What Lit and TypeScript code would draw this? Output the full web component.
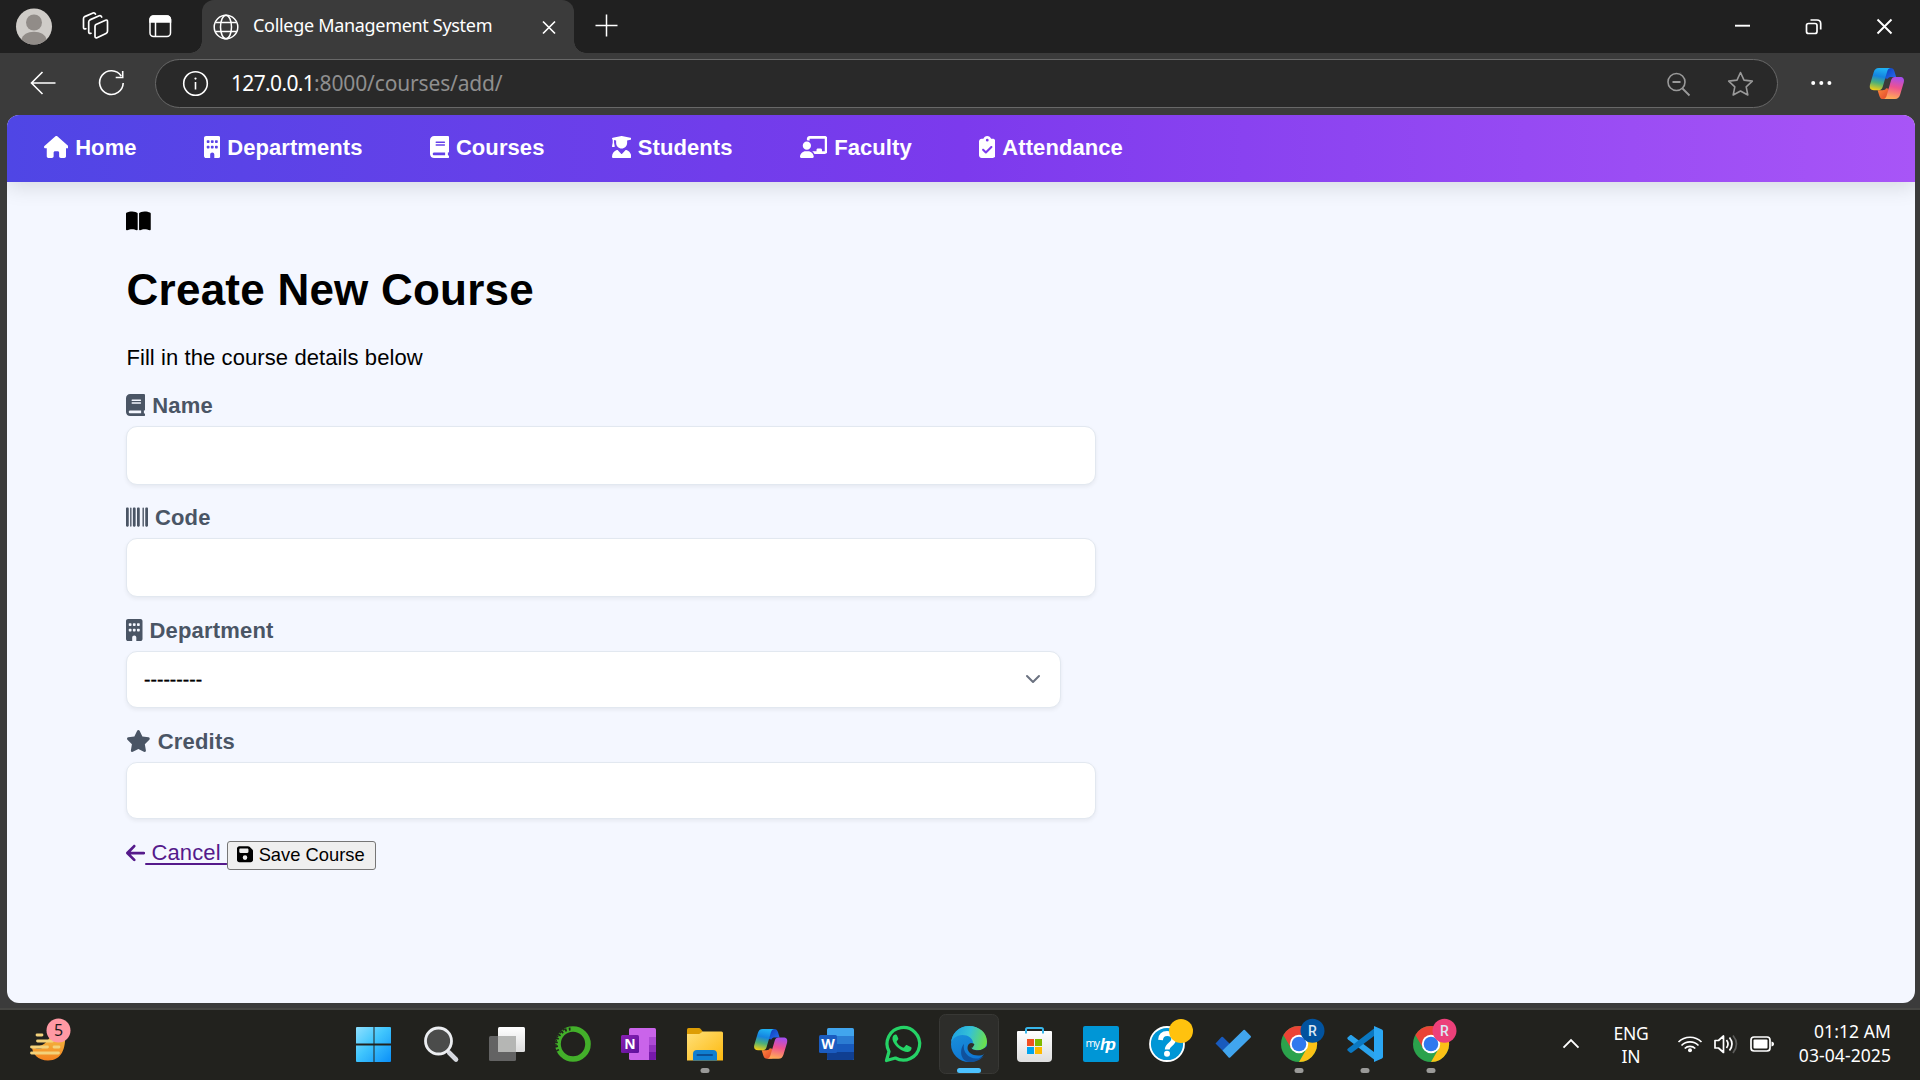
import { LitElement, html, css, svg } from "lit";
import { customElement, property } from "lit/decorators.js";

type Glyph = { w: number; d: string };

const glyphs: Record<string, Glyph> = {
  house: { w: 576, d: "M575.8 255.5c0 18-15 32.1-32 32.1h-32l.7 160.2c0 2.7-.2 5.4-.5 8.1V472c0 22.1-17.9 40-40 40H456c-1.1 0-2.2 0-3.3-.1c-1.4 .1-2.8 .1-4.2 .1H416 392c-22.1 0-40-17.9-40-40V448 384c0-17.7-14.3-32-32-32H256c-17.7 0-32 14.3-32 32v64 24c0 22.1-17.9 40-40 40H160 128.1c-1.5 0-3-.1-4.5-.2c-1.2 .1-2.4 .2-3.6 .2H104c-22.1 0-40-17.9-40-40V360c0-.9 0-1.9 .1-2.8V287.6H32c-18 0-32-14-32-32.1c0-9 3-17 10-24L266.4 8c7-7 15-8 22-8s15 2 21 7L564.8 231.5c8 7 12 15 11 24z" },
  building: { w: 384, d: "M48 0C21.5 0 0 21.5 0 48V464c0 26.5 21.5 48 48 48h96V432c0-26.5 21.5-48 48-48s48 21.5 48 48v80h96c26.5 0 48-21.5 48-48V48c0-26.5-21.5-48-48-48H48zM64 240c0-8.800 7.200-16 16-16h32c8.800 0 16 7.200 16 16v32c0 8.800-7.200 16-16 16H80c-8.800 0-16-7.200-16-16V240zm112-16h32c8.800 0 16 7.200 16 16v32c0 8.800-7.200 16-16 16H176c-8.800 0-16-7.200-16-16V240c0-8.800 7.200-16 16-16zm80 16c0-8.800 7.200-16 16-16h32c8.800 0 16 7.200 16 16v32c0 8.800-7.200 16-16 16H272c-8.800 0-16-7.200-16-16V240zM80 96h32c8.800 0 16 7.200 16 16v32c0 8.800-7.200 16-16 16H80c-8.800 0-16-7.200-16-16V112c0-8.800 7.200-16 16-16zm80 16c0-8.800 7.200-16 16-16h32c8.800 0 16 7.200 16 16v32c0 8.800-7.200 16-16 16H176c-8.800 0-16-7.200-16-16V112zM272 96h32c8.800 0 16 7.200 16 16v32c0 8.800-7.200 16-16 16H272c-8.800 0-16-7.200-16-16V112c0-8.800 7.200-16 16-16z" },
  book: { w: 448, d: "M96 0C43 0 0 43 0 96V416c0 53 43 96 96 96H384h32c17.700 0 32-14.300 32-32s-14.300-32-32-32V384c17.700 0 32-14.300 32-32V32c0-17.700-14.300-32-32-32H384 96zm0 384H352v64H96c-17.700 0-32-14.300-32-32s14.300-32 32-32zm32-240c0-8.800 7.200-16 16-16H336c8.800 0 16 7.200 16 16s-7.200 16-16 16H144c-8.800 0-16-7.200-16-16zm16 48H336c8.800 0 16 7.200 16 16s-7.200 16-16 16H144c-8.800 0-16-7.200-16-16s7.200-16 16-16z" },
  graduate: { w: 448, d: "M219.300 .5c3.100-.6 6.300-.6 9.400 0l200 40C439.900 42.700 448 52.600 448 64s-8.100 21.300-19.300 23.500L352 102.900V160c0 70.700-57.300 128-128 128s-128-57.300-128-128V102.900L48 93.300v65.100l15.700 78.400c.9 4.700-.3 9.600-3.300 13.300s-7.600 5.900-12.400 5.900H16c-4.800 0-9.300-2.100-12.400-5.900s-4.300-8.600-3.300-13.300L16 158.400V86.600C6.500 83.300 0 74.300 0 64C0 52.600 8.100 42.700 19.300 40.500l200-40zM111.900 327.700c10.500-3.400 21.800 .4 29.400 8.500l71 75.500c6.300 6.700 17 6.700 23.300 0l71-75.500c7.600-8.100 18.900-11.900 29.400-8.500C401 348.600 448 409.400 448 481.300c0 17-13.800 30.700-30.700 30.700H30.700C13.800 512 0 498.200 0 481.300c0-71.900 47-132.700 111.900-153.600z" },
  teacher: { w: 640, d: "M160 64c0-35.300 28.700-64 64-64H576c35.300 0 64 28.700 64 64V352c0 35.300-28.700 64-64 64H336.800c-11.800-25.500-29.900-47.500-52.400-64H384V320c0-17.700 14.300-32 32-32h64c17.700 0 32 14.300 32 32v32h64V64L224 64v49.100C205.200 102.200 183.300 96 160 96V64zm0 64a96 96 0 1 1 0 192 96 96 0 1 1 0-192zM133.300 352h53.300C260.300 352 320 411.700 320 485.300c0 14.700-11.900 26.700-26.700 26.700H26.700C11.900 512 0 500.100 0 485.300C0 411.700 59.700 352 133.300 352z" },
  clipboard: { w: 384, d: "M192 0c-41.800 0-77.400 26.700-90.500 64H64C28.700 64 0 92.700 0 128V448c0 35.300 28.700 64 64 64H320c35.300 0 64-28.700 64-64V128c0-35.300-28.700-64-64-64H282.500C269.400 26.700 233.800 0 192 0zm0 64a32 32 0 1 1 0 64 32 32 0 1 1 0-64zM305 273L177 401c-9.400 9.400-24.600 9.400-33.900 0L79 337c-9.400-9.400-9.400-24.600 0-33.900s24.600-9.400 33.900 0l47 47L271 239c9.400-9.400 24.600-9.400 33.900 0s9.400 24.600 0 33.900z" },
  open: { w: 576, d: "M249.600 471.500c10.800 3.800 22.400-4.100 22.400-15.500V78.600c0-4.200-1.600-8.400-5-11C247.400 52 202.400 32 144 32C93.500 32 46.300 45.300 18.100 56.100C6.800 60.500 0 71.700 0 83.800V454.100c0 11.900 12.800 20.200 24.100 16.500C55.600 460.100 105.500 448 144 448c33.900 0 79 14 105.600 23.500zm76.800 0C353 462 398.100 448 432 448c38.500 0 88.400 12.100 119.900 22.600c11.300 3.800 24.100-4.600 24.100-16.500V83.800c0-12.100-6.800-23.300-18.100-27.600C529.700 45.300 482.500 32 432 32c-58.400 0-103.400 20-123 35.600c-3.300 2.600-5 6.800-5 11V456c0 11.400 11.700 19.300 22.400 15.500z" },
  barcode: { w: 512, d: "M24 32C10.700 32 0 42.700 0 56V456c0 13.300 10.700 24 24 24H40c13.300 0 24-10.700 24-24V56c0-13.300-10.700-24-24-24H24zm88 0c-8.800 0-16 7.200-16 16V464c0 8.800 7.200 16 16 16s16-7.200 16-16V48c0-8.800-7.200-16-16-16zm72 0c-13.300 0-24 10.700-24 24V456c0 13.300 10.700 24 24 24h16c13.300 0 24-10.700 24-24V56c0-13.300-10.700-24-24-24H184zm96 0c-13.300 0-24 10.700-24 24V456c0 13.300 10.700 24 24 24h16c13.300 0 24-10.700 24-24V56c0-13.300-10.700-24-24-24H280zM448 56V456c0 13.300 10.700 24 24 24h16c13.300 0 24-10.700 24-24V56c0-13.300-10.700-24-24-24H472c-13.300 0-24 10.700-24 24zm-64-8V464c0 8.800 7.200 16 16 16s16-7.200 16-16V48c0-8.800-7.200-16-16-16s-16 7.200-16 16z" },
  star: { w: 576, d: "M316.900 18C311.600 7 300.400 0 288.100 0s-23.400 7-28.800 18L195 150.300 51.400 171.500c-12 1.800-22 10.200-25.700 21.700s-.7 24.200 7.900 32.700L137.800 329 113.200 474.700c-2 12 3 24.200 12.900 31.300s23 8 33.800 2.300l128.300-68.500 128.300 68.500c10.800 5.700 23.900 4.900 33.800-2.300s14.900-19.300 12.900-31.300L438.500 329 542.700 225.900c8.600-8.500 11.700-21.200 7.900-32.700s-13.700-19.900-25.700-21.700L381.200 150.300 316.900 18z" },
  arrow: { w: 448, d: "M9.400 233.400c-12.500 12.500-12.500 32.800 0 45.300l160 160c12.500 12.500 32.800 12.500 45.300 0s12.500-32.800 0-45.300L109.200 288 416 288c17.700 0 32-14.300 32-32s-14.300-32-32-32l-306.700 0L214.600 118.600c12.500-12.500 12.500-32.800 0-45.300s-32.800-12.500-45.300 0l-160 160z" },
  floppy: { w: 448, d: "M64 32C28.700 32 0 60.700 0 96V416c0 35.300 28.700 64 64 64H384c35.300 0 64-28.700 64-64V173.300c0-17-6.700-33.300-18.700-45.300L352 50.700C340 38.700 323.700 32 306.700 32H64zm0 96c0-17.700 14.300-32 32-32H288c17.700 0 32 14.300 32 32v64c0 17.700-14.300 32-32 32H96c-17.700 0-32-14.300-32-32V128zM224 288a64 64 0 1 1 0 128 64 64 0 1 1 0-128z" },
};

const glyph = (name: string, size = 22) => {
  const g = glyphs[name];
  return html`<svg class="glyph" width=${(g.w / 512) * size} height=${size} viewBox="0 0 ${g.w} 512"><path fill="currentColor" d=${g.d} /></svg>`;
};

/* Two interlocking ribbons, drawn in a 35.5 x 32.5 box. */
const copilotArt = svg`
  <defs>
    <linearGradient id="cpA" x1="0.4" y1="0" x2="0.2" y2="1"><stop offset="0" stop-color="#1fb0f2"/><stop offset=".35" stop-color="#1584e0"/><stop offset=".65" stop-color="#4db078"/><stop offset="1" stop-color="#f8cf12"/></linearGradient>
    <linearGradient id="cpB" x1="0.2" y1="1" x2="0.4" y2="0"><stop offset="0" stop-color="#a04df5"/><stop offset=".5" stop-color="#ee5290"/><stop offset="1" stop-color="#ffa858"/></linearGradient>
    <linearGradient id="cpC" x1="0" y1="0" x2="1" y2="1"><stop offset="0" stop-color="#0c3fb8"/><stop offset="1" stop-color="#2a6df0"/></linearGradient>
    <linearGradient id="cpD" x1="1" y1="1" x2="0" y2="0"><stop offset="0" stop-color="#ff8a3c"/><stop offset="1" stop-color="#e0442c"/></linearGradient>
  </defs>
  <path d="M16 .4h5.500c2 0 3.200 1 4 3.500l1.700 5.600h-5c-2 0-3 .6-3.600 2L16 11z" fill="url(#cpC)"/>
  <g transform="rotate(180 17.750 16.250)"><path d="M16 .4h5.500c2 0 3.200 1 4 3.500l1.700 5.600h-5c-2 0-3 .6-3.600 2L16 11z" fill="url(#cpD)"/></g>
  <path d="M9.500 .4H21.500c-2.200.2-3 2-3.600 4L13.500 19.500c-.7 2.400-2 3.500-4 3.500H4.500C1 23-.3 21 .5 17.500L4.200 5C5.100 2 6.500 .4 9.500 .4z" fill="url(#cpA)"/>
  <g transform="rotate(180 17.750 16.250)"><path d="M9.500 .4H21.500c-2.200.2-3 2-3.600 4L13.500 19.500c-.7 2.400-2 3.500-4 3.500H4.500C1 23-.3 21 .5 17.500L4.200 5C5.100 2 6.500 .4 9.500 .4z" fill="url(#cpB)"/></g>`;

const chromeArt = (badge: string) => svg`
  <circle cx="33" cy="34" r="18" fill="#2ba24c"/>
  <path d="M17.400 25A18 18 0 0 1 48.600 25H33L25.200 38.500z" fill="#ea4335"/>
  <path d="M48.600 25A18 18 0 0 1 33 52L40.800 38.500 33 25z" fill="#fbc116"/>
  <circle cx="33" cy="34" r="9.200" fill="#fff"/><circle cx="33" cy="34" r="7.300" fill="#3079ee"/>
  <circle cx="46.500" cy="20.800" r="12" fill=${badge}/>
  <text x="46.500" y="25.500" text-anchor="middle" class="badge-letter">R</text>`;

const taskIcons: { art: unknown; state?: "open" | "active" }[] = [
  { art: svg`<defs><linearGradient id="wn" x1="0" y1="0" x2="1" y2="1"><stop offset="0" stop-color="#8fe0ff"/><stop offset=".45" stop-color="#41c6fd"/><stop offset="1" stop-color="#0a8ff8"/></linearGradient></defs>
    <path transform="translate(-2 0)" fill="url(#wn)" d="M17 17h16.500v16.500H16V18a1 1 0 0 1 1-1zM34.500 17H50a1 1 0 0 1 1 1v15.500H34.500zM16 35.500h17.500V52H17a1 1 0 0 1-1-1zM34.500 35.500H51V51a1 1 0 0 1-1 1H34.500z"/>` },
  { art: svg`<g transform="translate(-2.500 0)"><path d="M43.500 42.500l7 7" stroke="#d6d9df" stroke-width="4.600" stroke-linecap="round"/><circle cx="33" cy="31" r="13" fill="#4b4c4b" stroke="#eceef1" stroke-width="2.800"/></g>` },
  { art: svg`<defs><linearGradient id="tv" x1="0" y1="0" x2="0" y2="1"><stop offset="0" stop-color="#fff"/><stop offset="1" stop-color="#dcdcdc"/></linearGradient></defs><g transform="translate(-2 0)"><rect x="17" y="26" width="27" height="25" rx="1.500" fill="#636363"/><rect x="26" y="17" width="27" height="25" rx="1.500" fill="url(#tv)"/><path d="M26 26h18v16H27.500a1.500 1.500 0 0 1-1.500-1.500z" fill="#b5b6b4"/></g>` },
  { art: svg`<circle cx="33" cy="34" r="15" fill="none" stroke="#43b02a" stroke-width="5.600"/><path d="M18 41a15 15 0 0 1 13-22" fill="none" stroke="#22221e" stroke-width="3" stroke-dasharray="1.800 2.200"/><path d="M16 36a17 17 0 0 1 11-18" fill="none" stroke="#22221e" stroke-width="1.400" stroke-dasharray="2 2.500"/>` },
  { art: svg`<defs><linearGradient id="on" x1="0" y1="0" x2="1" y2="1"><stop offset="0" stop-color="#8a22b4"/><stop offset="1" stop-color="#5c0f9a"/></linearGradient></defs><rect x="23" y="18" width="27" height="32" rx="1.500" fill="#ca64ea"/><path d="M43 27h7v8.500h-7z" fill="#ae4bd5"/><path d="M43 35h7v7h-7z" fill="#9332bf"/><path d="M43 42h7v6.500a1.500 1.500 0 0 1-1.500 1.500H43z" fill="#7719aa"/><rect x="15" y="25" width="18" height="18" rx="1.500" fill="url(#on)"/><text x="24" y="39" text-anchor="middle" class="tile-letter">N</text>` },
  { state: "open", art: svg`<defs><linearGradient id="fd" x1="0" y1="0" x2="1" y2="1"><stop offset="0" stop-color="#ffe07a"/><stop offset="1" stop-color="#fdb90d"/></linearGradient></defs><path d="M15 19.500a1.500 1.500 0 0 1 1.500-1.500h10c1 0 1.500.3 2.200 1l2 2.500L27 26H15z" fill="#dd9d05"/><path d="M15 24h11c1.500 0 2-.3 3-1.200l1.500-1.300H49.500a1.500 1.500 0 0 1 1.500 1.500V50.500H15z" fill="url(#fd)"/><path d="M21 50.500V44a4 4 0 0 1 4-4h16a4 4 0 0 1 4 4v6.500z" fill="#0f7fd0"/><path d="M25.500 45h14.500" stroke="#0b4f94" stroke-width="2" stroke-linecap="round"/>` },
  { art: svg`<g transform="translate(15.800 18.600) scale(.95 .94)">${copilotArt}</g>` },
  { art: svg`<rect x="23" y="18" width="27" height="32" rx="1.500" fill="#41a5ee"/><path d="M23 26h27v8H23z" fill="#2b7cd3"/><path d="M23 34h27v8H23z" fill="#185abd"/><path d="M23 42h27v6.500a1.500 1.500 0 0 1-1.500 1.500H24.500a1.500 1.500 0 0 1-1.500-1.500z" fill="#103f91"/><rect x="15" y="25" width="18" height="18" rx="1.500" fill="#1b5cc0"/><text x="24" y="39" text-anchor="middle" class="tile-letter">W</text>` },
  { art: svg`<path d="M16.500 50.500l2.500-9a16.300 16.300 0 1 1 6.400 6.500z" fill="none" stroke="#25d366" stroke-width="3.200" stroke-linejoin="round"/><path d="M27 25.500c-.5-1-1-.9-1.700-.9-2 .2-3 2.500-2.800 4.600.3 2.800 3.200 6.700 6.500 9.300 3 2.300 6.800 4 9 3.500 2-.4 3.500-2 3.600-3.800 0-.7-.2-1-.8-1.300l-3.600-1.700c-.7-.3-1.100-.2-1.500.3l-1.500 1.800c-.4.5-.8.5-1.400.3-2.600-1.100-4.700-2.900-6-5.300-.3-.6-.2-.9.2-1.300l1.100-1.400c.3-.5.3-.8.1-1.300z" fill="#25d366"/>` },
  { state: "active", art: svg`<defs><linearGradient id="eA" x1="0" y1=".3" x2="1" y2=".5"><stop offset="0" stop-color="#1ea0e2"/><stop offset=".5" stop-color="#35c1d6"/><stop offset="1" stop-color="#6be04c"/></linearGradient><linearGradient id="eB" x1=".2" y1="0" x2=".6" y2="1"><stop offset="0" stop-color="#1b94dc"/><stop offset="1" stop-color="#0e74d2"/></linearGradient></defs>
    <circle cx="33" cy="34" r="18" fill="url(#eB)"/><path d="M15 33.500A18 18 0 0 1 33 16c10.500 0 18 7 18 15.500 0 5.500-4 8.800-9 8.800-4.500 0-6.500-1.300-6.500-2.800 0-1 1.500-1.800 1.500-4.500 0-4.500-5-8-10.500-8C20 25 15.500 29.500 15 33.500z" fill="url(#eA)"/><path d="M28 34c-1.800 7.500 4.500 14.500 12 14.500 3.500 0 6-1.300 7.800-2.600C44.500 50 39 52.200 33.500 52 24.500 51.500 23 39.500 28 34z" fill="#10519c"/><path d="M35.500 37.500c0 1.500 2 2.800 6.500 2.800 3.500 0 6.500-1.700 9-4.300V42l-2.500 1.800c-2 1.500-3.500 1.700-6.500 1.700-6 0-10.500-3.500-10.500-7.500 0-3 1.500-4.500 3.500-5 2 0 3.500.8 3.300 1.800-.4 1-1.300 1.700-1.300 2.700z" fill="#2d2d2a"/><path d="M48.800 42.500l3-4v6l-3.500 1z" fill="#2d2d2a"/>` },
  { art: svg`<defs><linearGradient id="st" x1="0" y1="0" x2="0" y2="1"><stop offset="0" stop-color="#fff"/><stop offset="1" stop-color="#dedede"/></linearGradient></defs><g transform="translate(-2 0)"><path d="M26 24v-4.500a1.500 1.500 0 0 1 1.500-1.500h14a1.500 1.500 0 0 1 1.500 1.500V24" fill="none" stroke="#38b6ea" stroke-width="2"/><path d="M17 22a1 1 0 0 1 1-1h33a1 1 0 0 1 1 1v26a4 4 0 0 1-4 4H21a4 4 0 0 1-4-4z" fill="url(#st)"/><path d="M26 21v2.500M43 21v2.500" stroke="#38b6ea" stroke-width="2"/><path d="M27 29h7v7h-7z" fill="#f25022"/><path d="M35 29h7v7h-7z" fill="#7fba00"/><path d="M27 37h7v7h-7z" fill="#00a4ef"/><path d="M35 37h7v7h-7z" fill="#ffb900"/></g>` },
  { art: svg`<rect x="15" y="16" width="36" height="36" rx="2" fill="#0096d6"/><text x="17.500" y="37" class="my" textLength="14.500">my</text><text x="32" y="39.500" class="hp" textLength="16">hp</text>` },
  { art: svg`<circle cx="33" cy="34" r="17" fill="#0096d6" stroke="#fff" stroke-width="1.800"/><path d="M26.500 30c.3-4.500 3-6.500 6.700-6.500 4 0 6.500 2.200 6.500 5.500 0 5.500-6.500 5.200-6.500 10.500" fill="none" stroke="#fff" stroke-width="4.800"/><circle cx="33" cy="43.700" r="3" fill="#fff"/><circle cx="47" cy="21" r="12" fill="#ffc20e"/>` },
  { art: svg`<path d="M15.500 33.500l6-6.500a1 1 0 0 1 1.400 0l7.600 7.600-7 7z" fill="#185abd"/><path d="M22.500 40.500L43.500 20a1 1 0 0 1 1.400 0l5.800 6a1 1 0 0 1 0 1.400L30.200 47.500a1.200 1.200 0 0 1-1.600 0z" fill="#41a5ee"/>` },
  { state: "open", art: chromeArt("#02539f") },
  { state: "open", art: svg`<path d="M15.300 27.800l2.500-2.300c.8-.6 1.500-.6 2.300 0L44 43.500V51L16 29.500c-.7-.6-.9-1.100-.7-1.700z" fill="#2aa3ec"/><path d="M15.300 40.200l2.500 2.300c.8.6 1.500.6 2.300 0L44 24.500V17L16 38.500c-.7.6-.9 1.100-.7 1.700z" fill="#0a78c2"/><path d="M42 16l8 3.500a1.800 1.800 0 0 1 1 1.700v25.600a1.800 1.800 0 0 1-1 1.700L42 52z" fill="#2ba7f4"/>` },
  { state: "open", art: chromeArt("#ec407a") },
];

@customElement("title-bar")
export class TitleBar extends LitElement {
  static styles = css`
    :host { display: flex; height: 53px; background: #202020; color: #fff; font-family: "Noto Sans", "Open Sans", sans-serif; }
    svg { display: block; fill: none; stroke: #fff; stroke-width: 1.5; flex: none; }
    .tab { position: relative; display: flex; align-items: center; width: 372px; margin-left: 5px; padding: 0 15px 0 11px; box-sizing: border-box; background: #3b3b3b; border-radius: 12px 12px 0 0; }
    .tab::before, .tab::after { content: ""; position: absolute; bottom: 0; width: 12px; height: 12px; }
    .tab::before { left: -12px; background: radial-gradient(circle at 0 0, transparent 11.500px, #3b3b3b 12px); }
    .tab::after { right: -12px; background: radial-gradient(circle at 100% 0, transparent 11.500px, #3b3b3b 12px); }
    .name { flex: 1; margin: 0 0 3px 14px; font-size: 18px; line-height: 24px; letter-spacing: -0.310px; white-space: nowrap; }
    .space { flex: 1; }
  `;
  render() {
    return html`
      <svg width="68" height="53"><circle cx="34" cy="26.500" r="18" fill="#cfccc8" stroke="none" /><circle cx="34" cy="22.500" r="8" fill="#918c88" stroke="none" /><path d="M21.500 39.500c1-5 6-7.800 12.500-7.800s11.500 2.800 12.500 7.800a18 18 0 0 1-25 0z" fill="#918c88" stroke="none" /></svg>
      <svg width="55" height="53"><path d="M28 24.500l9.500-4.300q2-.7 2 1.500v9.500q0 1.500-1.500 2.200l-9 4.300q-2 .7-2-1.500v-9.700q0-1.400 1-2zM23 33.300q-2.300.6-2.300-1.300V22q0-1.500 1.200-2.100l9.300-4.100q1.700-.6 2.500 1.200M17.800 28.700q-2.300.6-2.300-1.300v-8.700q0-1.500 1.200-2.100l8.300-3.600q1.700-.6 2.500 1.100" stroke-width="1.700" stroke-linejoin="round" stroke-linecap="round" /></svg>
      <svg width="74" height="53"><rect x="27" y="16" width="20.500" height="20.500" rx="3.500" /><path d="M27 22v-2.500a3.500 3.500 0 0 1 3.500-3.500H44a3.500 3.500 0 0 1 3.500 3.500V22z" fill="#fff" /><path d="M32.500 22v14" /></svg>
      <div class="tab">
        <svg width="26" height="26"><circle cx="13" cy="13" r="11.800" /><ellipse cx="13" cy="13" rx="5.500" ry="11.800" /><path d="M2.500 8.500h21M2.500 17.500h21" /></svg>
        <span class="name">College Management System</span>
        <svg width="20" height="20"><path d="M4 4.500l12 12M16 4.500l-12 12" stroke-width="1.700" /></svg>
      </div>
      <svg width="66" height="53"><path d="M21.500 25.500h22M32.500 14.500v22" /></svg>
      <div class="space"></div>
      <svg width="71" height="53"><path d="M28 25.700h15" stroke-width="1.900" /></svg>
      <svg width="71" height="53"><rect x="28.500" y="23.500" width="10.500" height="10" rx="2" stroke-width="1.700" /><path d="M32.500 20H39c2.200 0 3.700 1.500 3.700 3.700V29.500" stroke-width="1.700" /></svg>
      <svg width="71" height="53"><path d="M28.500 19.500l14 14M42.500 19.500l-14 14" stroke-width="1.900" /></svg>
    `;
  }
}

@customElement("address-row")
export class AddressRow extends LitElement {
  static styles = css`
    :host { display: flex; align-items: center; height: 62px; background: #3b3b3b; font-family: "Noto Sans", "Open Sans", sans-serif; }
    svg { display: block; fill: none; stroke: #fff; stroke-width: 1.600; flex: none; }
    .field { display: flex; align-items: center; flex: 1; height: 48.500px; margin-top: -1px; padding: 0 10px 0 26px; box-sizing: border-box; border: 1.300px solid #686868; border-radius: 25px; background: #292929; }
    .url { flex: 1; margin: 0 0 2px 22px; font-size: 21px; line-height: 30px; letter-spacing: -0.150px; color: #8f8f8f; white-space: nowrap; }
    .host { color: #fff; letter-spacing: -0.650px; }
    .muted { stroke: #9a9a9a; }
    .copilot { stroke: none; }
  `;
  render() {
    return html`
      <svg width="78" height="62"><path d="M55.500 30H32M42.500 19l-11 11 11 11" /></svg>
      <svg width="77" height="62"><path d="M43.500 23A11.800 11.800 0 1 0 45.500 30M45 18v6.500h-7" transform="translate(-.3 0)" /></svg>
      <div class="field">
        <svg width="27" height="27"><circle cx="13.500" cy="13.500" r="11.800" /><path d="M13.500 12v7.500" /><circle cx="13.500" cy="8.600" r="1.100" fill="#fff" stroke="none" /></svg>
        <span class="url"><span class="host">127.0.0.1</span>:8000/courses/add/</span>
        <svg class="muted" width="62" height="48"><g transform="translate(-1 0)"><circle cx="30.500" cy="22" r="8.500" /><path d="M26.500 22h8M36.500 28.500l7 7" stroke-width="1.800" /></g></svg>
        <svg class="muted" width="58" height="48"><path transform="translate(2 0)" d="M29.500 12.500l3.500 7.600 8.300 1-6.100 5.700 1.600 8.200-7.300-4-7.300 4 1.600-8.200-6.100-5.700 8.300-1z" stroke-linejoin="round" /></svg>
      </div>
      <svg width="88" height="62"><g fill="#fff" stroke="none"><circle cx="35.200" cy="30" r="2" /><circle cx="43.300" cy="30" r="2" /><circle cx="51.400" cy="30" r="2" /></g></svg>
      <svg class="copilot" width="54" height="62"><g transform="translate(3.500 14.600)scale(.98 .98)">${copilotArt}</g></svg>
    `;
  }
}

@customElement("course-page")
export class CoursePage extends LitElement {
  static styles = css`
    :host { display: flex; flex-direction: column; height: 888px; margin: 0 5px 0 7px; border-radius: 12px; overflow: hidden; background: #f4f7ff; font-family: "Liberation Sans", Arial, sans-serif; font-size: 22px; line-height: 26px; letter-spacing: 0.200px; color: #000; }
    .glyph { display: block; flex: none; }
    nav { display: flex; flex: none; align-items: center; gap: 67.200px; height: 67px; padding: 0 36.500px 2px; box-sizing: border-box; background: linear-gradient(90deg, #4f46e5, #7c3aed 50%, #a855f7); box-shadow: 0 5px 20px rgba(0, 0, 0, 0.120); color: #fff; font-weight: 700; letter-spacing: 0.080px; }
    nav a { display: flex; align-items: center; gap: 6.900px; }
    nav .glyph { position: relative; top: -0.500px; }
    main { display: flex; flex-direction: column; align-items: flex-start; padding: 28px 0 0 119px; }
    h1 { margin: 33px 0 0; font-size: 44px; line-height: 50px; font-weight: 700; letter-spacing: 0.230px; text-indent: 0.600px; }
    p { margin: 30px 0 21px; letter-spacing: 0.090px; text-indent: 0.400px; }
    .group { display: flex; flex-direction: column; gap: 8px; height: 112px; }
    .group.mid { height: 113px; }
    .group.choice { height: 111px; }
    .group.last { height: 91px; }
    label { display: flex; align-items: center; gap: 6.900px; height: 26px; font-weight: 700; color: #4a5565; letter-spacing: 0.200px; }
    label span { padding-top: 2px; }
    .box { display: flex; align-items: center; justify-content: space-between; width: 970px; height: 58.500px; box-sizing: border-box; border: 1.300px solid #e2e8f0; border-radius: 11px; background: #fff; box-shadow: 0 2px 4px rgba(0, 0, 0, 0.060); }
    .choice .box { width: 934.500px; height: 56.500px; padding: 0 18.500px 0 17px; font-size: 19.250px; letter-spacing: 0; }
    .dashes { padding-top: 2px; letter-spacing: 0.050px; -webkit-text-stroke: 0.400px #000; }
    .last .box { height: 58px; }
    .actions { display: flex; align-items: flex-start; margin-top: 22px; }
    .cancel { display: flex; align-items: center; color: #551a8b; height: 24px; letter-spacing: 0.120px; }
    .cancel span { white-space: pre; text-decoration: underline; text-decoration-thickness: 2px; text-underline-offset: 3px; }
    button { display: flex; align-items: center; gap: 5.200px; height: 29px; width: 149px; padding: 0 0 2px 9.500px; box-sizing: border-box; border: 1.300px solid #767676; border-radius: 3px; background: #efefef; color: #000; font: 18.330px "Liberation Sans", Arial, sans-serif; white-space: nowrap; }
  `;
  private links = [["house", "Home"], ["building", "Departments"], ["book", "Courses"], ["graduate", "Students"], ["teacher", "Faculty"], ["clipboard", "Attendance"]];
  render() {
    return html`
      <nav>${this.links.map(([icon, label]) => html`<a>${glyph(icon)}<span>${label}</span></a>`)}</nav>
      <main>
        ${glyph("open")}
        <h1>Create New Course</h1>
        <p>Fill in the course details below</p>
        <div class="group"><label>${glyph("book")}<span>Name</span></label><div class="box"></div></div>
        <div class="group mid"><label>${glyph("barcode")}<span>Code</span></label><div class="box"></div></div>
        <div class="group choice">
          <label>${glyph("building")}<span>Department</span></label>
          <div class="box"><span class="dashes">---------</span><svg width="16" height="12" viewBox="0 0 16 12"><path d="M2 3l6 6 6-6" fill="none" stroke="#6b7280" stroke-width="2" stroke-linecap="round" stroke-linejoin="round" /></svg></div>
        </div>
        <div class="group last"><label>${glyph("star")}<span>Credits</span></label><div class="box"></div></div>
        <div class="actions">
          <a class="cancel">${glyph("arrow")}<span> Cancel </span></a>
          <button>${glyph("floppy", 18.33)}Save Course</button>
        </div>
      </main>
    `;
  }
}

@customElement("task-bar")
export class TaskBar extends LitElement {
  @property({ attribute: false }) icons = taskIcons;
  static styles = css`
    :host { display: flex; height: 70px; background: #22221e; color: #fff; font-family: "Noto Sans", "Open Sans", sans-serif; font-size: 17.500px; line-height: 23.500px; }
    svg { display: block; flex: none; }
    .widgets { margin-right: 242px; }
    .count { font-size: 16px; fill: #1b1b1b; }
    .apps { display: flex; flex: 1; }
    .badge-letter { font: 500 14px "Roboto", sans-serif; fill: #dce8f5; }
    .tile-letter { font: 700 14px "Open Sans", sans-serif; fill: #fff; }
    .my { font: 11px "Open Sans", sans-serif; fill: #fff; }
    .hp { font: italic 700 17px "Liberation Sans", sans-serif; fill: #fff; }
    .lang { width: 74px; padding-top: 11.500px; text-align: center; letter-spacing: -0.200px; }
    .clock { width: 110px; padding: 10px 29px 0 0; text-align: right; letter-spacing: 0.080px; white-space: nowrap; }
  `;
  render() {
    return html`
      <svg class="widgets" width="100" height="70">
        <defs><linearGradient id="bw" x1="0" y1="0" x2="0" y2="1"><stop offset="0" stop-color="#f2c046" /><stop offset="1" stop-color="#f5831f" /></linearGradient></defs>
        <path d="M32 36c7 2 14-1 20-12h13c1 14-3 26.500-17 26.500C38 50.500 32 44 32 36z" fill="url(#bw)" /><path d="M34 37.500q5 3 9 0z" fill="#7a6a48" />
        <path d="M37 25h5M37.500 31h15M31.500 37h16M54 37h5M31.500 43h27" stroke="#f3d27b" stroke-width="2.800" stroke-linecap="round" />
        <circle cx="58.500" cy="20.500" r="12" fill="#ff99a4" /><text class="count" x="58.500" y="26.200" text-anchor="middle">5</text>
      </svg>
      <div class="apps">
        ${this.icons.map((item) => html`<svg width="66" height="70">
          ${item.state === "active" ? svg`<rect x="3.500" y="4.500" width="59" height="59" rx="6" fill="#2d2d2a" stroke="#383835"/>` : null}
          ${item.art}
          ${item.state === "active" ? svg`<rect x="21" y="58" width="24" height="5" rx="2.500" fill="#4cc2ff"/>` : null}
          ${item.state === "open" ? svg`<rect x="28.500" y="58" width="9" height="5" rx="2.500" fill="#9a9a98"/>` : null}
        </svg>`)}
      </div>
      <svg width="50" height="70"><path d="M17.500 38l7.500-7.500 7.500 7.500" transform="translate(2 -.3)" fill="none" stroke="#fff" stroke-width="1.900" /></svg>
      <div class="lang"><div>ENG</div><div>IN</div></div>
      <svg width="113" height="70" viewBox="-5 0 113 70" fill="none" stroke="#fff" stroke-width="1.700">
        <path d="M5.500 32a16.300 16.300 0 0 1 23 0M8.500 35.500a12 12 0 0 1 17 0M11.700 38.500a7.500 7.500 0 0 1 10.600 0" /><circle cx="17" cy="40.300" r="2" fill="#fff" stroke="none" />
        <path d="M42 30.500h3.500l5-4.500v16.500l-5-4.500H42z" stroke-linejoin="round" /><path d="M53.500 30q3 4 0 8M56.500 27.500q5 6.500 0 13" /><path d="M60 25.500q7 8.500 0 17.500" stroke="#5d5d5b" />
        <rect x="78" y="27" width="19" height="14" rx="3" /><rect x="80.500" y="29.500" width="14" height="9" rx="1" fill="#fff" stroke="none" /><path d="M98.500 31.500c2 .5 2.500 1.500 2.500 2.500s-.5 2-2.500 2.500z" fill="#fff" stroke="none" />
      </svg>
      <div class="clock"><div>01:12 AM</div><div>03-04-2025</div></div>
    `;
  }
}

@customElement("app-root")
export class AppRoot extends LitElement {
  static styles = css`
    :host { display: flex; flex-direction: column; width: 1920px; height: 1080px; overflow: hidden; background: #3b3b3b; }
    .edge { height: 5px; border-bottom: 2px solid #454542; }
  `;
  render() {
    return html`<title-bar></title-bar><address-row></address-row><course-page></course-page><div class="edge"></div><task-bar></task-bar>`;
  }
}
